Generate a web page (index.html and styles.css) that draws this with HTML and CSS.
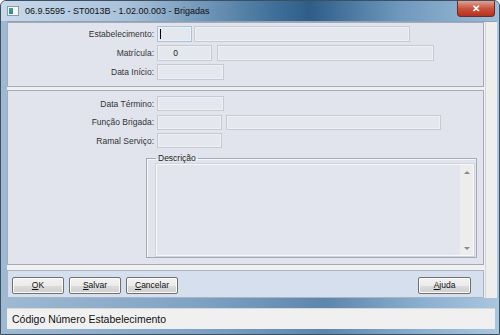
FILE: index.html
```html
<!DOCTYPE html>
<html lang="pt">
<head>
  <meta charset="UTF-8">
  <title>Brigadas</title>
  <link rel="stylesheet" href="styles.css">
</head>
<body>
  <div class="window">
    <div class="titlebar">
      <span class="app-icon"><span></span></span>
      <span class="title">06.9.5595 - ST0013B - 1.02.00.003 - Brigadas</span>
      <span class="close">&#x2715;</span>
    </div>

    <div class="client">
      <div class="main">
        <div class="panel panel-top">
          <div class="form-row">
            <label>Estabelecimento:</label>
            <div class="field w34 focus"><span class="caret"></span></div>
            <div class="field w216"></div>
          </div>
          <div class="form-row">
            <label>Matrícula:</label>
            <div class="field w55 center">0</div>
            <div class="field w217 gap5"></div>
          </div>
          <div class="form-row">
            <label>Data Início:</label>
            <div class="field w67"></div>
          </div>
        </div>

        <div class="panel panel-bottom">
          <div class="form-row">
            <label>Data Término:</label>
            <div class="field w67"></div>
          </div>
          <div class="form-row">
            <label>Função Brigada:</label>
            <div class="field w65"></div>
            <div class="field w215 gap4"></div>
          </div>
          <div class="form-row">
            <label>Ramal Serviço:</label>
            <div class="field w65"></div>
          </div>

          <fieldset class="group">
            <legend>Descrição</legend>
            <div class="memo">
              <div class="memo-scroll">
                <span class="arrow up"></span>
                <span class="arrow down"></span>
              </div>
            </div>
          </fieldset>
        </div>

        <div class="buttonbar">
          <button><u>O</u>K</button>
          <button><u>S</u>alvar</button>
          <button><u>C</u>ancelar</button>
          <button class="help"><u>A</u>juda</button>
        </div>
      </div>
      <div class="side"></div>
    </div>

    <div class="statusbar">Código Número Estabelecimento</div>
  </div>
</body>
</html>
```

FILE: styles.css
```css
body {
  margin: 0;
  font-family: "Liberation Sans", Arial, sans-serif;
  color: #222;
}

.window {
  width: 500px;
  height: 335px;
  box-sizing: border-box;
  padding: 0 2px 5px 6px;
  display: flex;
  flex-direction: column;
  background: linear-gradient(90deg, #9fb9d2 0%, #7fa2c3 40%, #5d86ad 65%, #8cb0cf 85%, #a9c6df 100%);
  border: 1px solid #3c4f63;
  border-radius: 6px 6px 0 0;
  overflow: hidden;
}

.titlebar {
  height: 21px;
  display: flex;
  align-items: center;
  margin-left: -6px;
  margin-right: -2px;
  padding-left: 6px;
  background: linear-gradient(90deg, #c9d9ea 0%, #a9c2db 25%, #3f6f98 55%, #2f5d88 62%, #6f98bd 80%, #9dbdd8 100%);
}

.app-icon {
  width: 10px;
  height: 8px;
  background: #f4f6f8;
  border: 1px solid #8a9aa8;
  margin-right: 6px;
  position: relative;
}

.app-icon span {
  position: absolute;
  left: 1px;
  top: 1px;
  width: 4px;
  height: 6px;
  background: linear-gradient(#4caf50, #2e7bcf);
}

.title {
  font-size: 9px;
  color: #111;
}

.close {
  margin-left: auto;
  margin-right: 4px;
  align-self: flex-start;
  width: 38px;
  height: 16px;
  line-height: 16px;
  text-align: center;
  font-size: 10px;
  font-weight: bold;
  color: #fff;
  background: linear-gradient(#e0a294, #c9533f 50%, #b8301c);
  border: 1px solid #6f2a22;
  border-top: none;
  border-radius: 0 0 4px 4px;
  box-sizing: border-box;
}

.client {
  display: flex;
  background: #f0f0f0;
  border-top: 1px solid #8aa3bb;
}

.main {
  width: 477px;
  display: flex;
  flex-direction: column;
}

.side {
  flex: 1;
  background: #eeeeee;
  border-left: 1px solid #d6d6d6;
  margin: 0 1px 0 1px;
}

.panel {
  background: #e1e4ed;
  border: 1px solid #a4abb6;
  box-sizing: border-box;
}

.panel-top {
  height: 65px;
  padding-top: 3px;
}

.panel-bottom {
  height: 175px;
  margin-top: 3px;
  padding-top: 5px;
}

.form-row {
  display: flex;
  align-items: center;
  margin-bottom: 3px;
}

.panel-bottom .form-row {
  margin-bottom: 3.5px;
}

.form-row label {
  width: 146px;
  text-align: right;
  font-size: 8.5px;
  color: #333;
  padding-right: 3px;
}

.field {
  height: 16px;
  box-sizing: border-box;
  background: #e4e7ee;
  border: 1px solid #c6cad2;
  box-shadow: inset 0 0 0 1px #eef0f4;
  font-size: 8.5px;
  line-height: 14px;
  position: relative;
}

.panel-bottom .field {
  height: 15px;
}

.field.focus {
  border-color: #a9c3de;
}

.caret {
  position: absolute;
  left: 2px;
  top: 2px;
  width: 1px;
  height: 10px;
  background: #000;
}

.center {
  text-align: center;
  padding-right: 18px;
}

.w34 { width: 35px; margin-right: 2px; }
.w55 { width: 55px; }
.w65 { width: 65px; }
.w67 { width: 67px; }
.w216 { width: 216px; }
.w217 { width: 217px; }
.w215 { width: 215px; }
.gap5 { margin-left: 5px; }
.gap4 { margin-left: 4px; }

.group {
  margin: 5px 6px 0 138px;
  height: 105px;
  box-sizing: border-box;
  border: 1px solid #a4abb6;
  box-shadow: inset 1px 1px 0 #f4f6f9;
  padding: 0 2px 2px 10px;
  min-width: 0;
}

.group legend {
  font-size: 8.5px;
  color: #222;
  padding: 0 2px;
  margin-left: -1px;
}

.memo {
  height: 92px;
  margin-left: -1px;
  margin-top: 1px;
  box-sizing: border-box;
  background: #e2e5ee;
  border: 1px solid #f6f7fa;
  outline: 1px solid #d0d4dc;
  display: flex;
  justify-content: flex-end;
}

.memo-scroll {
  width: 13px;
  background: #ededee;
  border-left: 1px solid #e6e6e8;
  display: flex;
  flex-direction: column;
  justify-content: space-between;
  align-items: center;
  padding: 6px 0 5px;
}

.arrow {
  width: 0;
  height: 0;
  border-left: 3px solid transparent;
  border-right: 3px solid transparent;
}

.arrow.up { border-bottom: 3px solid #8a8a8a; }
.arrow.down { border-top: 3px solid #8a8a8a; }

.buttonbar {
  margin-top: 5px;
  height: 28px;
  box-sizing: border-box;
  background: #d6dfee;
  border: 1px solid #a9b4c4;
  display: flex;
  align-items: center;
  padding: 2px 12px 0 4px;
  gap: 5px;
}

.buttonbar button {
  width: 52px;
  height: 17px;
  padding: 0;
  font-family: "Liberation Sans", Arial, sans-serif;
  font-size: 8.5px;
  color: #111;
  background: linear-gradient(#f3f3f3, #ebebeb 50%, #dcdcdc 51%, #cfcfcf);
  border: 1px solid #707070;
  border-radius: 2px;
  box-shadow: inset 0 0 0 1px #fafafa;
}

.buttonbar .help {
  margin-left: auto;
  width: 53px;
}

.statusbar {
  margin-top: 10px;
  margin-right: 2px;
  height: 21px;
  box-sizing: border-box;
  background: #f0f0f0;
  border-top: 1px solid #d8d8d8;
  font-size: 10.5px;
  line-height: 20px;
  padding-left: 5px;
  color: #111;
}
```
